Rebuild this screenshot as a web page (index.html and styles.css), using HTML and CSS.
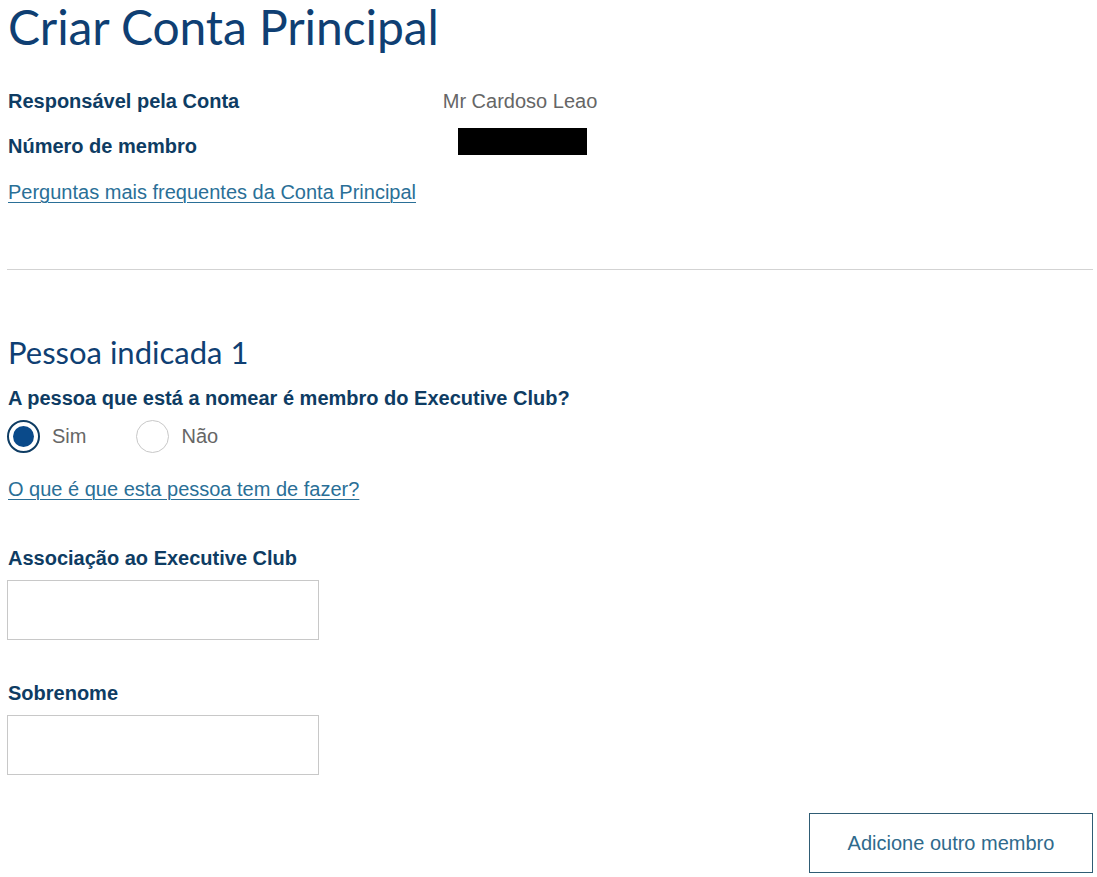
FILE: index.html
```html
<!DOCTYPE html>
<html lang="pt">
<head>
<meta charset="utf-8">
<title>Criar Conta Principal</title>
<link rel="stylesheet" href="styles.css">
</head>
<body>
<main class="page">
  <h1 class="title">Criar Conta Principal</h1>

  <dl class="info">
    <dt class="info-label">Responsável pela Conta</dt>
    <dd class="info-value">Mr Cardoso Leao</dd>
    <dt class="info-label">Número de membro</dt>
    <dd class="info-value"><span class="redacted"></span></dd>
  </dl>
  <a class="link link-faq" href="#">Perguntas mais frequentes da Conta Principal</a>

  <hr class="divider">

  <section class="nominee">
    <h2 class="subtitle">Pessoa indicada 1</h2>
    <p class="question">A pessoa que está a nomear é membro do Executive Club?</p>
    <div class="radios">
      <label class="radio">
        <input type="radio" name="member" checked>
        <span class="radio-mark"></span>
        <span class="radio-text">Sim</span>
      </label>
      <label class="radio">
        <input type="radio" name="member">
        <span class="radio-mark"></span>
        <span class="radio-text">Não</span>
      </label>
    </div>
    <a class="link link-help" href="#">O que é que esta pessoa tem de fazer?</a>

    <div class="field field-first">
      <label class="field-label" for="assoc">Associação ao Executive Club</label>
      <input class="field-input" id="assoc" type="text">
    </div>
    <div class="field field-next">
      <label class="field-label" for="surname">Sobrenome</label>
      <input class="field-input" id="surname" type="text">
    </div>

    <div class="actions">
      <button class="btn-outline" type="button">Adicione outro membro</button>
    </div>
  </section>
</main>
</body>
</html>
```

FILE: styles.css
```css
* { box-sizing: border-box; }

html, body {
  margin: 0;
  padding: 0;
  background: #ffffff;
}

body {
  font-family: "Liberation Sans", Arial, sans-serif;
  font-size: 20px;
  color: #0e3c63;
}

.page {
  width: 1097px;
  padding: 0 4px 0 7px;
  display: flex;
  flex-direction: column;
}

.title {
  margin: 0 0 0 1px;
  font-family: Lato, "Open Sans", sans-serif;
  font-weight: 400;
  font-size: 48px;
  line-height: 54px;
  color: #0f3f73;
  letter-spacing: -0.1px;
}

.info {
  margin: 25px 0 0 1px;
  display: grid;
  grid-template-columns: 432px 160px;
  grid-auto-rows: 45px;
  line-height: 45px;
}

.info-label {
  font-weight: 700;
  color: #0e3c63;
}

.info-value {
  margin: 0;
  color: #666666;
  text-align: center;
}

.redacted {
  display: inline-block;
  width: 129px;
  height: 27px;
  background: #000;
  vertical-align: top;
  margin-top: 4px;
  margin-left: 4px;
}

.link {
  color: #2a6f97;
  text-decoration: underline;
  text-underline-offset: 3px;
  text-decoration-thickness: 1px;
}

.link-faq {
  align-self: flex-start;
  margin: 1px 0 0 1px;
  line-height: 45px;
}

.divider {
  margin: 54px 0 0 0;
  border: 0;
  border-top: 1px solid #d3d3d3;
  height: 0;
}

.nominee {
  display: flex;
  flex-direction: column;
}

.subtitle {
  margin: 62px 0 0 1px;
  font-family: Lato, "Open Sans", sans-serif;
  font-weight: 400;
  font-size: 31px;
  line-height: 40px;
  color: #0f3f73;
}

.question {
  margin: 11px 0 0 1px;
  font-weight: 700;
  line-height: 30px;
  color: #0e3c63;
}

.radios {
  display: flex;
  gap: 50px;
  margin-top: 6px;
  height: 34px;
  align-items: center;
}

.radio {
  display: flex;
  align-items: center;
  gap: 12px;
  cursor: pointer;
}

.radio input {
  display: none;
}

.radio-mark {
  width: 33px;
  height: 33px;
  border-radius: 50%;
  border: 1px solid #c8c8c8;
  background: #fff;
  position: relative;
}

.radio input:checked + .radio-mark {
  border: 2px solid #0e3c63;
}

.radio input:checked + .radio-mark::after {
  content: "";
  position: absolute;
  left: 4px;
  top: 4px;
  width: 21px;
  height: 21px;
  border-radius: 50%;
  background: #0a4a8a;
}

.radio-text {
  color: #666666;
  line-height: 30px;
}

.link-help {
  align-self: flex-start;
  margin: 21px 0 0 1px;
  line-height: 30px;
}

.field {
  display: flex;
  flex-direction: column;
}

.field-first {
  margin-top: 39px;
}

.field-next {
  margin-top: 38px;
}

.field-label {
  font-weight: 700;
  color: #0e3c63;
  line-height: 30px;
  margin-left: 1px;
}

.field-input {
  margin-top: 7px;
  width: 312px;
  height: 60px;
  border: 1px solid #c8c8c8;
  border-radius: 0;
  padding: 0 12px;
  font-family: inherit;
  font-size: 20px;
  background: #fff;
  outline: none;
}

.actions {
  display: flex;
  justify-content: flex-end;
  margin-top: 38px;
}

.btn-outline {
  width: 284px;
  height: 60px;
  background: #fff;
  border: 1px solid #2f5c74;
  border-radius: 0;
  color: #2f6a8c;
  font-family: "Liberation Sans", Arial, sans-serif;
  font-size: 20px;
  cursor: pointer;
}
```
